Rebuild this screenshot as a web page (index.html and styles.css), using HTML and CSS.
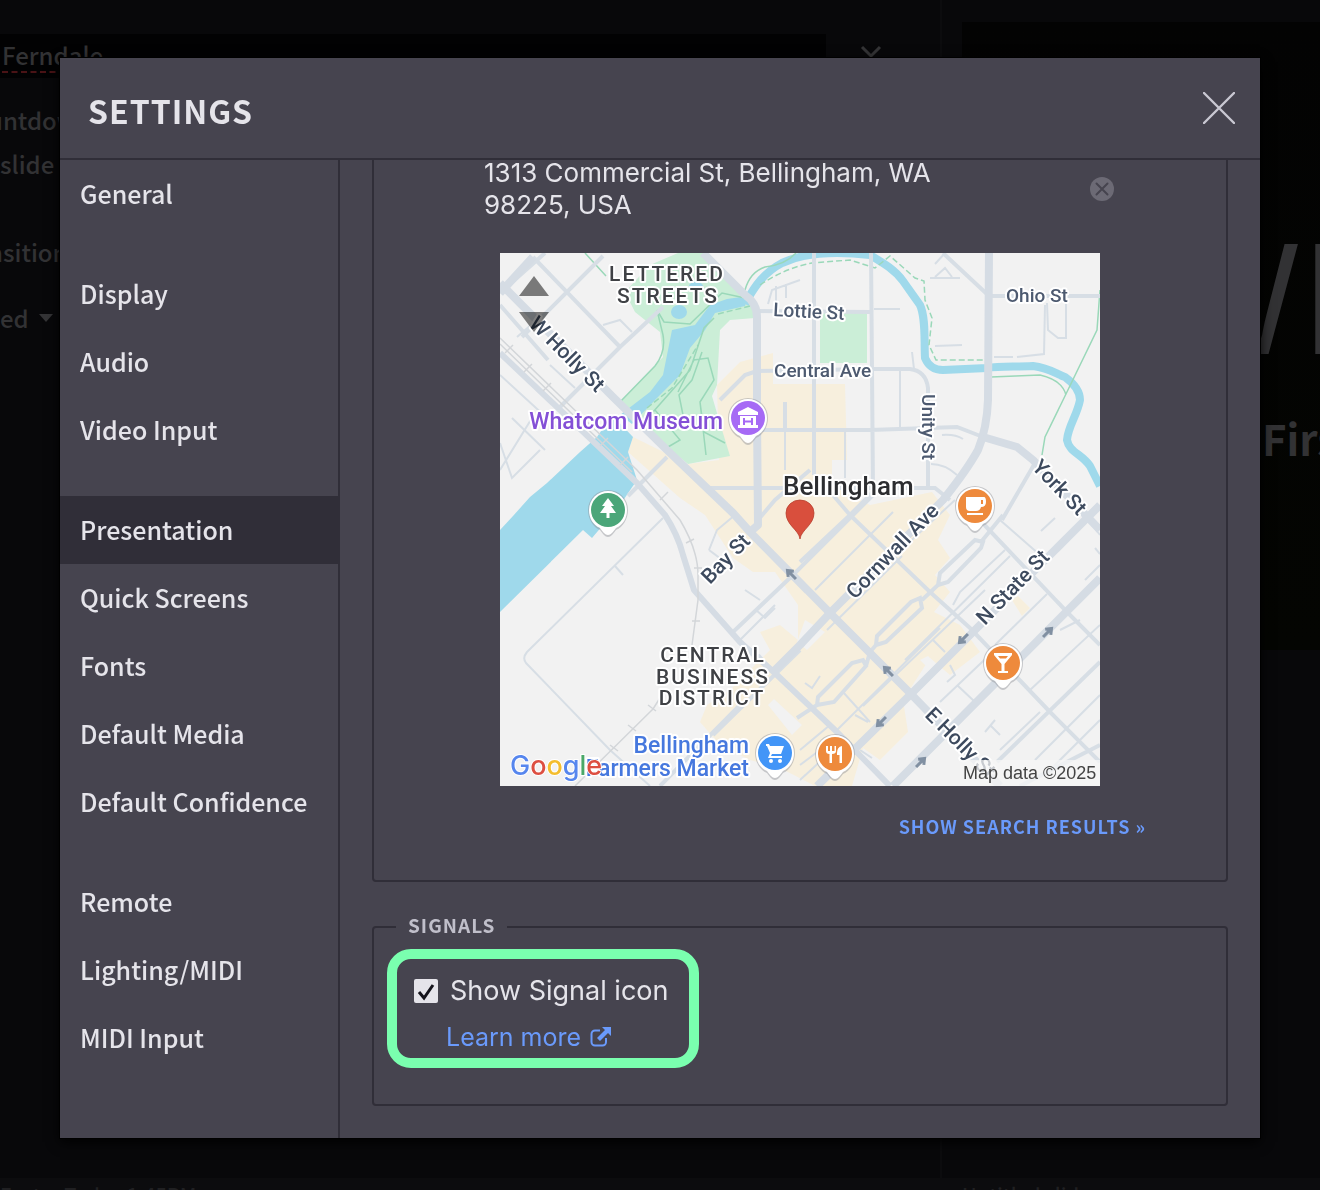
FILE: index.html
```html
<!DOCTYPE html>
<html lang="en">
<head>
<meta charset="utf-8">
<title>Settings</title>
<link rel="stylesheet" href="styles.css">
</head>
<body>
<div class="app" aria-hidden="true">
  <div class="workspace">
    <section class="editor">
      <div class="title-row">
        <div class="title-field"><span class="misspelt">Ferndale</span></div>
        <svg class="chevron" viewBox="0 0 22 14" width="22" height="14"><path d="M2 2l9 9 9-9" fill="none" stroke="#343436" stroke-width="3"/></svg>
      </div>
      <p class="option option-cut">untdown</p>
      <p class="option">slide</p>
      <p class="option option-cut option-spaced">nsition</p>
      <p class="option option-select">ed <svg viewBox="0 0 14 8" width="14" height="8"><path d="M0 0h14l-7 8z" fill="#343436"/></svg></p>
    </section>
    <section class="preview">
      <div class="stage">
        <p class="stage-title">WELCOME</p>
        <p class="stage-sub">First</p>
      </div>
    </section>
  </div>
  <footer class="statusbar"><span>Easter Today 1:45PM</span><span>Untitled slide</span></footer>
</div>

<div class="dialog" role="dialog" aria-modal="true" aria-labelledby="dialog-title">
  <header class="dialog-head">
    <h1 id="dialog-title">SETTINGS</h1>
    <button class="close" type="button" aria-label="Close">
      <svg viewBox="0 0 32 32" width="32" height="32"><path d="M1 1l30 30M31 1L1 31" fill="none" stroke="#c9c8d2" stroke-width="2.4" stroke-linecap="round"/></svg>
    </button>
  </header>
  <div class="dialog-body">
    <nav class="nav" aria-label="Settings sections">
      <ul><li><a href="#general">General</a></li></ul>
      <ul>
        <li><a href="#display">Display</a></li>
        <li><a href="#audio">Audio</a></li>
        <li><a href="#video">Video Input</a></li>
      </ul>
      <ul>
        <li><a href="#presentation" class="current" aria-current="page">Presentation</a></li>
        <li><a href="#quick">Quick Screens</a></li>
        <li><a href="#fonts">Fonts</a></li>
        <li><a href="#media">Default Media</a></li>
        <li><a href="#confidence">Default Confidence</a></li>
      </ul>
      <ul>
        <li><a href="#remote">Remote</a></li>
        <li><a href="#lighting">Lighting/MIDI</a></li>
        <li><a href="#midi">MIDI Input</a></li>
      </ul>
    </nav>
    <main class="pane">
      <section class="group location">
        <div class="address-row">
          <p class="address">1313 Commercial St, Bellingham, WA 98225, USA</p>
          <button class="clear" type="button" aria-label="Clear location">
            <svg viewBox="0 0 24 24" width="24" height="24"><circle cx="12" cy="12" r="12" fill="#6c6a75"/><path d="M6.500 6.500l11 11M17.500 6.500l-11 11" stroke="#46444f" stroke-width="2" stroke-linecap="round"/></svg>
          </button>
        </div>
        <div class="map">
          <svg class="map-art" viewBox="500 253 600 533" role="img" aria-label="Map of Bellingham">
            <defs>
              <g id="pin">
                <path d="M0 27C-3 27-5 24-8 20C-15 17-20 9-20 0A20 20 0 0 1 20 0C20 9 15 17 8 20C5 24 3 27 0 27Z" fill="#8d9096" opacity=".45"/>
                <path d="M0 25C-3 25-5 22-8 18C-15 15-19 8-19 0A19 19 0 0 1 19 0C19 8 15 15 8 18C5 22 3 25 0 25Z" fill="#fff"/>
              </g>
              <path id="oneway" d="M-7 0H4M0-4L5 0L0 4" fill="none" stroke="#8190a2" stroke-width="3"/>
            </defs>
            <rect x="500" y="253" width="600" height="533" fill="#f2f2f2"/>
            <path fill="#f7efdd" d="M717 385L740 362L773 353V384H845L847 460H832V486L870 505L932 492L950 515L938 540L950 558L935 575L950 592L934 612L960 625L980 652L950 675L930 658L903 700L908 732L880 760L863 748L852 786H815L780 768L750 760L720 745L700 722L707 705L730 690L770 650L760 632L780 625L798 640V605L775 572L753 572L733 558L720 538L705 515L680 498L628 452L633 437L688 464L719 460Z"/>
            <g fill="#f2f2f2"><path d="M805 620l20 12-18 18-10-8zM920 660l8-4 14 14-6 6z"/><path d="M768 705l6-6 28 26-10 10z"/></g>
            <path fill="#f7efdd" d="M1012 600l6-4 12 12-8 8z"/>
            <path fill="#cbeed7" d="M678 253H703L738 290L750 302L755 318L730 320L720 330L717 385L712 396L719 420L730 456L688 464L667 447L620 402L663 357L660 332L635 312L625 292L650 265Z"/>
            <path fill="#cbeed7" d="M820 313h47v50h-47z"/>
            <g fill="#9fd9eb">
              <path d="M748 296L727 299L710 305L695 325L672 330L668 350L663 375L650 392L620 415L632 424L655 400L680 375L690 348L705 330L715 313L745 306Z"/>
              <path d="M500 530L513 516L530 497L547 483L580 452L597 437L612 415L633 437L628 452L637 480L620 505L592 538L583 530L500 612Z"/>
              <ellipse cx="679" cy="312" rx="8" ry="7"/><ellipse cx="696" cy="286" rx="7" ry="4"/>
            </g>
            <path fill="none" stroke="#9fd9eb" stroke-width="8" stroke-linejoin="round" d="M745 304C755 285 765 272 782 263C810 250 845 252 870 255C885 264 895 270 903 281L920 305C926 318 924 340 925 358Q930 370 943 370L987 368C1000 366 1015 367 1033 366C1050 368 1056 374 1065 377Q1080 388 1080 400C1077 416 1068 426 1067 440C1069 452 1082 454 1090 466L1100 486"/>
            <g fill="none" stroke="#9ad8b9" stroke-width="1.500">
              <path d="M620 402L655 366Q666 352 663 335L657 310L664 322L690 324L722 293L745 298"/>
              <path d="M653 412L690 370L704 328L714 318M655 410L680 440L668 447M678 392L694 360L708 358L714 380L700 402L704 432L725 443M702 352L692 380L679 395L686 430M700 402L706 455"/>
              <path d="M745 290Q750 272 765 267Q785 265 796 253M585 253L606 276"/>
              <path d="M1100 290L1097 330L1065 396L1045 437L1042 455M991 377L1040 375Q1062 380 1066 395"/>
              <path stroke-dasharray="6 3" d="M647 408L672 388L698 345M718 314L750 306M760 285Q785 268 812 263L850 260L875 268L890 256L915 278L924 281L925 300L932 318L929 345L936 360H984"/>
            </g>
            <g fill="none" stroke="#d7dee5" stroke-width="2">
              <path d="M663 518L527 652Q522 658 526 663L610 750L650 786M615 566l8 9M500 443L512 478L540 450M500 470L532 418M512 418L545 450M517 337L560 300M550 365L575 388M603 325L620 320L632 332M500 375L560 430"/>
              <path d="M935 264L945 253M930 278H960M935 277L945 268L952 277M935 346L962 345M912 352L914 369M874 309H900M994 357H1013M1017 357L1044 354L1045 305M1047 303L1048 330L1058 338H1066V300M900 370V428M942 435Q955 434 963 439M785 402V470M845 430V478M931 464Q945 464 957 475M768 304L772 290L800 280M776 286V302M786 284V298"/>
              <path d="M1000 520L1040 555M1041 531L1055 518M1085 516L1100 535M1095 548L1100 554M1085 580L1100 565M815 590L893 512M862 586L955 500M827 630L902 556M953 605L960 592L1005 550M905 660L1010 556M933 640L945 652M863 706L985 590M995 645L1047 594M843 692L870 722M855 715L868 722M835 732L940 628M950 665L955 675L947 682M940 702L1000 645M957 685L975 702M985 732L995 720M990 725L1000 735M1030 690L1100 625M1060 630L1080 620M800 750L830 725M800 765L840 735M800 780L825 757M860 750L872 758M1035 760L1100 695M1000 750L1040 712M709 550L717 530L735 515M709 550L725 562M740 640L775 605M756 610L765 618L775 608M745 590L760 600M1050 770L1100 720M805 683L812 688L820 676"/>
            </g>
            <g fill="none" stroke="#d7dee5" stroke-width="4">
              <path d="M814 253V475M871 253L873 490M757 311L871 312M757 371L870 369H910Q926 371 928 388V488M757 430H870L957 427L983 437M943 253L989 296H1100M710 488H935L950 500M720 400L745 375L757 371M785 402V430M1002 520L1035 463"/>
              <path d="M500 293L545 253M522 337L603 256M560 407L620 347L663 307M533 257L620 347M500 305L548 360M628 496L667 457M733 632L793 575L873 495M713 735L800 650M773 672L758 655M758 520L775 500L810 470M800 562L850 515L875 490M820 480L850 515"/>
              <path d="M850 515L930 592L970 628L1050 712L1100 762M975 515L1067 612L1100 645M997 762L1100 662M1020 786L1100 745M660 786L740 705"/>
              <path d="M797 718L817 705L818 697L852 663L863 660L866 666L834 702L817 705M870 652L876 645L877 636L911 602L920 598L922 608L886 642L876 645M866 666L870 652M922 600L938 585L940 573L975 540L983 542L981 548L948 582L938 585M981 542L1003 515"/>
            </g>
            <g fill="none" stroke="#d5dce4" stroke-width="8" stroke-linejoin="round">
              <path d="M500 283L613 397L667 450L733 513L750 532L830 613L910 693L1000 786M533 257L500 293"/>
              <path d="M703 253L745 295Q757 303 757 317V417L758 525L750 532"/>
              <path d="M989 253L988 400Q987 428 978 450Q967 470 943 500L830 613L800 645L773 672"/>
              <path d="M983 437L1017 447L1033 460L1100 530"/>
              <path d="M817 786L910 695L960 645L1087 518L1100 505M893 786L1100 578"/>
              <path stroke-width="6" d="M500 353L637 483L665 515Q678 535 683 555L694 590L740 642L777 675L837 732L890 786"/>
            </g>
            <g fill="none" stroke="#d3d6d9" stroke-width="1.500">
              <path d="M500 338L637 470L680 520Q698 550 698 575L698 600L692 645M500 344L632 472M653 709L575 786M665 690L653 709"/>
              <path d="M505 353l8-8M524 372l8-8M543 391l8-8M600 446l8-8M620 465l8-8M660 500l8-8M686 543l8-4M694 568h8M692 621h8M648 705l8 6M628 725l8 6M610 745l8 6"/>
            </g>
            <use href="#oneway" transform="translate(791 574) rotate(225)"/>
            <use href="#oneway" transform="translate(888 671) rotate(225)"/>
            <use href="#oneway" transform="translate(963 639) rotate(135)"/>
            <use href="#oneway" transform="translate(881 722) rotate(135)"/>
            <use href="#oneway" transform="translate(1048 632) rotate(-45)"/>
            <use href="#oneway" transform="translate(921 762) rotate(-45)"/>
            <g class="map-label street">
              <text x="773" y="316" transform="rotate(3 773 316)">Lottie St</text>
              <text x="774" y="377">Central Ave</text>
              <text x="1006" y="302">Ohio St</text>
              <text transform="translate(922 394) rotate(90)">Unity St</text>
            </g>
            <g class="map-label avenue">
              <text transform="translate(528 325) rotate(45)">W Holly St</text>
              <text transform="translate(1031 468) rotate(46)">York St</text>
              <text transform="translate(710 585) rotate(-46)">Bay St</text>
              <text transform="translate(855 600) rotate(-46)">Cornwall Ave</text>
              <text transform="translate(985 626) rotate(-46)">N State St</text>
              <text transform="translate(924 716) rotate(45)">E Holly St</text>
            </g>
            <g class="map-label district">
              <text x="667" y="281">LETTERED</text><text x="668" y="303">STREETS</text>
              <text x="713" y="662">CENTRAL</text><text x="713" y="684">BUSINESS</text><text x="712" y="705">DISTRICT</text>
            </g>
            <text class="map-label city" x="783" y="495">Bellingham</text>
            <text class="map-label museum" x="723" y="429">Whatcom Museum</text>
            <g class="map-label market"><text x="749" y="753">Bellingham</text><text x="749" y="776">Farmers Market</text></g>
            <g transform="translate(748 418)"><use href="#pin"/><circle r="17" fill="#a66af5"/><path d="M0-11L10-6V-3H-10V-6ZM-8-2H8V7H10V10H-10V7H-8Z" fill="#fff"/><path d="M-4 0V7M4 0V7M-4 3.500H4" fill="none" stroke="#a66af5" stroke-width="2"/></g>
            <g transform="translate(608 510)"><use href="#pin"/><circle r="17" fill="#4ba679"/><path d="M0-12L6-4H3L8 3H1.500V8H-1.500V3H-8L-3-4H-6Z" fill="#fff"/></g>
            <g transform="translate(975 506)"><use href="#pin"/><circle r="17" fill="#ee8a3c"/><path d="M-9-9H9Q11-9 11-4Q11 1 6 1Q5 5 1 5H-5Q-9 5-9 1ZM6-6V-2H8V-6ZM-8 7H8V9H-8Z" fill="#fff" fill-rule="evenodd"/></g>
            <g transform="translate(1003 663)"><use href="#pin"/><circle r="17" fill="#ee8a3c"/><path d="M-9-10H9V-8L1.500 1V8H5V10H-5V8H-1.500V1L-9-8ZM-5-7L-3-4.500H3L5-7Z" fill="#fff" fill-rule="evenodd"/></g>
            <g transform="translate(835 754)"><use href="#pin"/><circle r="17" fill="#ee8a3c"/><path d="M-9-8V-3Q-9 0-5.500 0V9H-3V0Q1 0 1-3V-8H-.5V-3H-3V-8H-5V-3H-7V-8ZM7-8Q2-7 2-1V1H4.500V9H7Z" fill="#fff"/></g>
            <g transform="translate(775 753)"><use href="#pin"/><circle r="17" fill="#4295f7"/><path d="M-9-9H-6L-5-7H9L6 1H-3L-4 3H7V5H-7L-5 0L-8-7H-9Z" fill="#fff"/><circle cx="-4" cy="8" r="2" fill="#fff"/><circle cx="5" cy="8" r="2" fill="#fff"/></g>
            <path d="M800 539C799 530 786 525 786 513A14 13 0 0 1 814 513C814 525 801 530 800 539Z" fill="#d94f3d" stroke="#b8402f" stroke-width=".8"/>
            <text class="map-logo" x="510" y="775"><tspan fill="#5686ee">G</tspan><tspan fill="#dd4f41">o</tspan><tspan fill="#f4bd2d">o</tspan><tspan fill="#5686ee">g</tspan><tspan fill="#4aa868">l</tspan><tspan fill="#dd4f41">e</tspan></text>
            <rect x="960" y="760" width="140" height="26" fill="#f5f5f5" opacity=".75"/>
            <text class="map-credit" x="963" y="779">Map data ©2025</text>
          </svg>
          <div class="map-steps">
            <button type="button" aria-label="Zoom in"><svg viewBox="0 0 30 20" width="30" height="20"><path d="M0 20L15 0L30 20Z"/></svg></button>
            <button type="button" aria-label="Zoom out"><svg viewBox="0 0 30 20" width="30" height="20"><path d="M0 0H30L15 20Z"/></svg></button>
          </div>
        </div>
        <a class="results-link" href="#results">SHOW SEARCH RESULTS »</a>
      </section>
      <fieldset class="group signals">
        <legend>SIGNALS</legend>
        <div class="highlight">
          <label class="check"><input type="checkbox" checked>Show Signal icon</label>
          <a class="learn" href="#learn">Learn more
            <svg viewBox="0 0 22 22" width="22" height="22"><path d="M10 4.500H5A3.500 3.500 0 0 0 1.500 8V16A3.500 3.500 0 0 0 5 19.500H12.500A3.500 3.500 0 0 0 16 16V12" fill="none" stroke="#6a9afb" stroke-width="2"/><path d="M12 1H21V10L18 7L10 15L7 12L15 4Z" fill="#6a9afb"/></svg>
          </a>
        </div>
      </fieldset>
    </main>
  </div>
</div>
</body>
</html>
```

FILE: styles.css
```css
* { box-sizing: border-box; }
body {
  margin: 0;
  background: #08080a;
  color: #e5e4ea;
  font-family: "Noto Sans CJK SC", "Noto Sans", sans-serif;
}
p, h1, ul { margin: 0; padding: 0; }
ul { list-style: none; }
button { padding: 0; border: 0; background: none; cursor: pointer; }
svg { display: block; }

/* Dimmed workspace behind the dialog */
.app {
  display: flex;
  flex-direction: column;
  height: 100vh;
  overflow: hidden;
  color: #323234;
  font-size: 24px;
  font-weight: 500;
}
.workspace {
  flex: 1;
  min-height: 0;
  display: grid;
  grid-template-columns: 940px 1fr;
}
.editor { overflow: hidden; padding-top: 34px; }
.title-row { display: flex; align-items: center; gap: 34px; margin-bottom: 20px; }
.title-field {
  width: 826px;
  height: 44px;
  padding-left: 2px;
  background: #020203;
  line-height: 42px;
}
.chevron { margin-bottom: 8px; }
.misspelt { text-decoration: underline dashed #4a1316 2px; text-underline-offset: 6px; }
.option { line-height: 44px; }
.option-cut { margin-left: -12px; }
.option-spaced { margin-top: 44px; margin-bottom: 22px; }
.option-select { display: flex; align-items: center; gap: 10px; }
.preview {
  overflow: hidden;
  padding: 22px 0 0 20px;
  border-left: 2px solid #0c0c0e;
}
.stage {
  height: 628px;
  padding: 180px 0 0 196px;
  background: linear-gradient(#030303, #040502);
  overflow: hidden;
  white-space: nowrap;
}
.stage-title { font-family: "Open Sans", sans-serif; font-size: 154px; font-weight: 400; line-height: 184px; }
.stage-sub { margin-top: 22px; padding-left: 104px; font-size: 42px; font-weight: 700; line-height: 60px; }
.statusbar {
  display: grid;
  grid-template-columns: 940px 1fr;
  height: 12px;
  overflow: hidden;
  background: #0c0c0e;
  color: #202022;
  font-size: 20px;
  line-height: 34px;
}
.statusbar span { padding-left: 22px; }
.statusbar span:first-child { padding-left: 0; }

/* Dialog */
.dialog {
  position: fixed;
  inset: 58px 60px 52px;
  display: flex;
  flex-direction: column;
  background: #46444f;
  box-shadow: 0 0 0 1px #000, 0 4px 12px #000;
}
.dialog-head {
  display: flex;
  align-items: center;
  justify-content: space-between;
  height: 102px;
  padding: 0 25px 0 28px;
  border-bottom: 2px solid #302e38;
}
h1 { padding-top: 4px; font-size: 32px; font-weight: 700; letter-spacing: 1px; line-height: 48px; }
.dialog-body { flex: 1; min-height: 0; display: flex; }
.nav { width: 280px; border-right: 2px solid #302e38; }
.nav ul + ul { margin-top: 32px; }
.nav a {
  display: block;
  padding: 0 0 2px 20px;
  color: inherit;
  font-size: 25px;
  font-weight: 500;
  line-height: 66px;
  text-decoration: none;
}
.nav .current { background: #302e38; }

/* The pane rests at the end of its scroll */
.pane {
  flex: 1;
  min-width: 0;
  display: flex;
  flex-direction: column;
  justify-content: flex-end;
  gap: 33px;
  padding: 0 32px;
  padding-bottom: 32px;
  overflow: hidden;
}
.group { margin: 0; border: 2px solid #302e38; border-radius: 4px; }
.location { padding: 30px 80px 38px 110px; }
.address-row {
  display: flex;
  align-items: center;
  justify-content: space-between;
  margin: 0 32px 32px 0;
}
.address { max-width: 480px; font-family: Inter, sans-serif; font-size: 26px; line-height: 32px; }
.map { position: relative; width: 600px; margin-left: 16px; }
.map-art { width: 100%; }
.map-steps { position: absolute; left: 19px; top: 23px; display: grid; gap: 16px; }
.map-steps path { fill: #000; opacity: .5; }
.results-link {
  display: block;
  margin-top: 24px;
  color: #6a9afb;
  font-size: 18px;
  font-weight: 700;
  letter-spacing: 1px;
  line-height: 32px;
  text-align: right;
  text-decoration: none;
}
.signals { padding: 10px 13px 36px; }
.signals legend {
  margin-left: 9px;
  padding: 0 12px 4px;
  color: #c0bfca;
  font-size: 19px;
  font-weight: 700;
  letter-spacing: 1px;
  line-height: 20px;
}
.highlight {
  display: flex;
  flex-direction: column;
  gap: 12px;
  width: 312px;
  padding: 15px 17px 4px;
  border: 10px solid #7affaf;
  border-radius: 24px;
  font-family: Inter, sans-serif;
  font-size: 27px;
  line-height: 34px;
  white-space: nowrap;
}
.check { display: flex; align-items: center; gap: 12px; }
.check input {
  appearance: none;
  width: 24px;
  height: 24px;
  margin: 0;
  border-radius: 2px;
  background: #e5e4ea;
}
.check input:checked {
  background: #e5e4ea url("data:image/svg+xml,%3Csvg xmlns='http://www.w3.org/2000/svg' viewBox='0 0 24 24'%3E%3Cpath d='M5 13l5 6L19 6' fill='none' stroke='%2315141c' stroke-width='3'/%3E%3C/svg%3E");
}
.learn {
  display: flex;
  align-items: center;
  gap: 9px;
  padding-left: 32px;
  color: #6a9afb;
  font-size: 25px;
  text-decoration: none;
}

/* Map lettering */
.map-label {
  font-family: Roboto, sans-serif;
  font-weight: 500;
  fill: #4d5a70;
  stroke: #fff;
  stroke-width: 4px;
  stroke-linejoin: round;
  paint-order: stroke;
}
.street { font-size: 19px; }
.avenue { font-size: 21px; fill: #3d4a5e; }
.district { font-size: 21px; letter-spacing: 2px; text-anchor: middle; fill: #3f4145; }
.city { font-size: 26px; fill: #2c2d30; }
.museum { font-size: 23px; text-anchor: end; fill: #8450d6; }
.market { font-size: 23px; text-anchor: end; fill: #4678de; }
.map-logo { font-family: Inter, sans-serif; font-size: 27px; font-weight: 500; stroke: #fff; stroke-width: 2px; paint-order: stroke; }
.map-credit { font-family: "Liberation Sans", sans-serif; font-size: 18px; fill: #444; }
```
